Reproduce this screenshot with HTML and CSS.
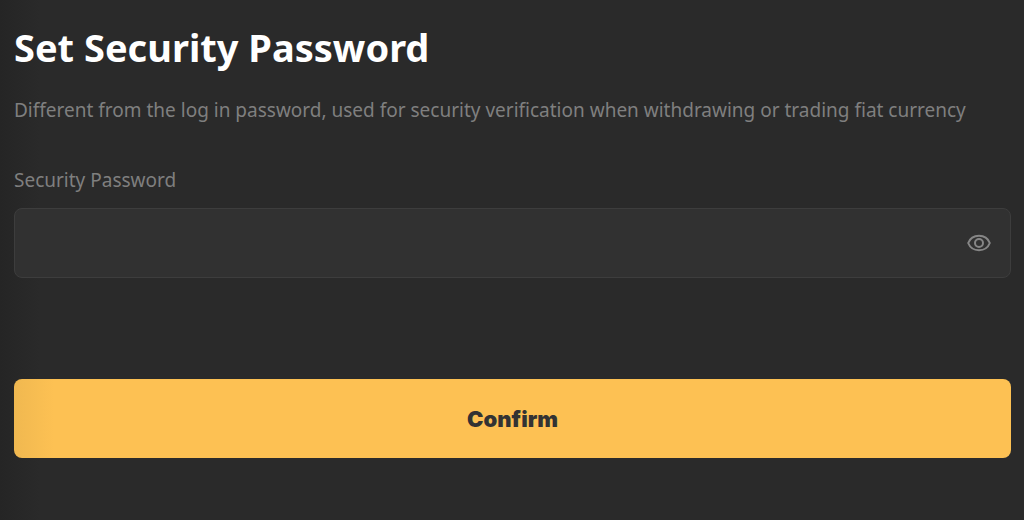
FILE: index.html
```html
<!DOCTYPE html>
<html lang="en">
<head>
  <meta charset="UTF-8" />
  <meta name="viewport" content="width=device-width, initial-scale=1.0" />
  <title>Set Security Password</title>
  <link rel="stylesheet" href="styles.css">
</head>
<body>
  <main class="container">
    <h1>Set Security Password</h1>
    <p class="description">Different from the log in password, used for security verification when withdrawing or trading fiat currency</p>

    <form class="password-form">
      <label for="security-password">Security Password</label>
      <div class="input-box">
        <input type="password" id="security-password" autocomplete="new-password" />
        <button type="button" class="toggle-button" aria-label="Show password">
          <svg viewBox="0 0 24 18" width="24" height="18" fill="none" stroke="currentColor" stroke-width="2">
            <path d="M1.200 9C3 4.400 7 1.800 12 1.800S21 4.400 22.800 9C21 13.600 17 16.200 12 16.200S3 13.600 1.200 9Z" />
            <circle cx="12" cy="9" r="4" />
          </svg>
        </button>
      </div>
      <button type="submit" class="confirm-button">Confirm</button>
    </form>
  </main>
</body>
</html>
```
FILE: styles.css
```css
body {
  --bg-main: #2a2a2a;
  --bg-input: #313131;
  --border-color: #3d3d3d;
  --text-main: #ffffff;
  --text-secondary: #7f7f7f;
  --primary: #fdc153;
  --button-text: #333333;

  margin: 0;
  background: linear-gradient(to right, #252525, var(--bg-main) 40px);
  color: var(--text-main);
  font-family: "Segoe UI", "Noto Sans", "Open Sans", sans-serif;
  min-height: 100vh;
}

.container {
  padding: 20px 13px 24px 14px;
}

h1 {
  margin: 0;
  font-size: 38px;
  line-height: 54px;
  font-weight: 700;
}

.description {
  margin: 22px 0 0;
  font-size: 19px;
  line-height: 28px;
  color: var(--text-secondary);
}

.password-form {
  display: flex;
  flex-direction: column;
  margin-top: 42px;
}

label {
  font-size: 19px;
  line-height: 28px;
  color: var(--text-secondary);
}

.input-box {
  display: flex;
  align-items: center;
  box-sizing: border-box;
  height: 70px;
  margin-top: 14px;
  padding: 0 19px;
  background-color: var(--bg-input);
  border: 1px solid var(--border-color);
  border-radius: 8px;
}

.input-box input {
  flex: 1;
  min-width: 0;
  height: 100%;
  padding: 0;
  border: none;
  outline: none;
  background: transparent;
  color: var(--text-main);
  font: inherit;
  font-size: 19px;
}

.toggle-button {
  display: flex;
  padding: 0;
  border: none;
  background: transparent;
  color: #868686;
  cursor: pointer;
}

.confirm-button {
  height: 79px;
  margin-top: 101px;
  border: none;
  border-radius: 8px;
  background: linear-gradient(to right, #f0b850, var(--primary) 40px);
  color: var(--button-text);
  font-family: Inter, "Noto Sans", sans-serif;
  font-size: 22px;
  font-weight: 900;
  cursor: pointer;
}
```
